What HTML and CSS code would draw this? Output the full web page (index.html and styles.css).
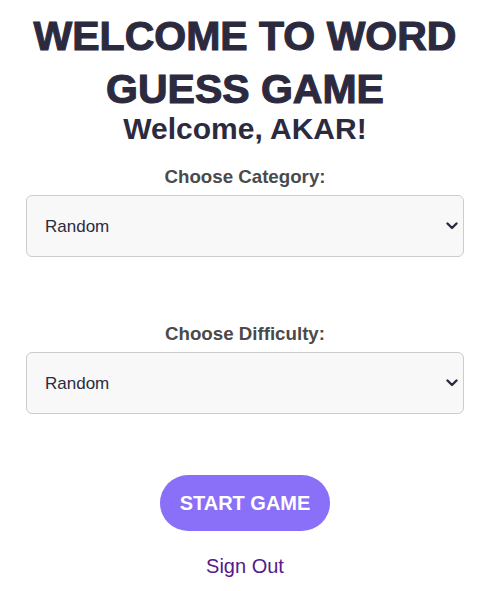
FILE: index.html
```html
<!DOCTYPE html>
<html>
<head>
<meta charset="utf-8">
<link rel="stylesheet" href="styles.css">
</head>
<body>
<main class="page">
  <h1 class="title">WELCOME TO WORD GUESS GAME</h1>
  <h2 class="welcome">Welcome, AKAR!</h2>
  <div class="field">
    <label class="label" for="category">Choose Category:</label>
    <div class="select-wrap">
      <select id="category" class="select">
        <option>Random</option>
      </select>
      <svg class="chevron" width="12" height="8" viewBox="0 0 12 8" aria-hidden="true"><path d="M1.5 1.5 L6 6 L10.5 1.5" fill="none" stroke="#2c2a3f" stroke-width="2.4" stroke-linecap="round" stroke-linejoin="round"/></svg>
    </div>
  </div>
  <div class="field field-second">
    <label class="label" for="difficulty">Choose Difficulty:</label>
    <div class="select-wrap">
      <select id="difficulty" class="select">
        <option>Random</option>
      </select>
      <svg class="chevron" width="12" height="8" viewBox="0 0 12 8" aria-hidden="true"><path d="M1.5 1.5 L6 6 L10.5 1.5" fill="none" stroke="#2c2a3f" stroke-width="2.4" stroke-linecap="round" stroke-linejoin="round"/></svg>
    </div>
  </div>
  <button class="start">START GAME</button>
  <a class="signout" href="#">Sign Out</a>
</main>
</body>
</html>
```
FILE: styles.css
```css
html, body {
  margin: 0;
  padding: 0;
  background: #ffffff;
}
body {
  font-family: "Liberation Sans", Arial, sans-serif;
  color: #2c2a3f;
}
.page {
  display: flex;
  flex-direction: column;
  align-items: center;
  padding: 10px 22px 0 26px;
}
.title {
  margin: 0;
  font-size: 41px;
  line-height: 53px;
  font-weight: 700;
  text-align: center;
  color: #2c2a3f;
  -webkit-text-stroke: 1.1px #2c2a3f;
  width: 440px;
}
.welcome {
  margin: -4px 0 0;
  font-size: 30px;
  line-height: 34px;
  font-weight: 700;
  color: #2c2a3f;
}
.field {
  width: 100%;
  display: flex;
  flex-direction: column;
  align-items: center;
  margin-top: 20px;
}
.field-second {
  margin-top: 66px;
}
.label {
  font-size: 18.72px;
  font-weight: 700;
  color: #4a4a4a;
  line-height: 22px;
  margin-bottom: 7px;
}
.select-wrap {
  position: relative;
  width: 100%;
}
.select {
  display: block;
  width: 100%;
  height: 62px;
  box-sizing: border-box;
  border: 1px solid #cccccc;
  border-radius: 6px;
  background: #f8f8f8;
  padding: 0 30px 0 18px;
  font-family: "Liberation Sans", Arial, sans-serif;
  font-size: 17px;
  color: #2c2a3f;
  appearance: none;
  -webkit-appearance: none;
}
.chevron {
  position: absolute;
  right: 6px;
  top: 27px;
  pointer-events: none;
}
.start {
  margin-top: 61px;
  border: none;
  border-radius: 28px;
  background: #8a6ff8;
  color: #ffffff;
  font-family: "Liberation Sans", Arial, sans-serif;
  font-size: 20px;
  font-weight: 700;
  height: 56px;
  padding: 0 20px;
}
.signout {
  margin-top: 24px;
  font-size: 20px;
  color: #551a8b;
  text-decoration: none;
}
```
